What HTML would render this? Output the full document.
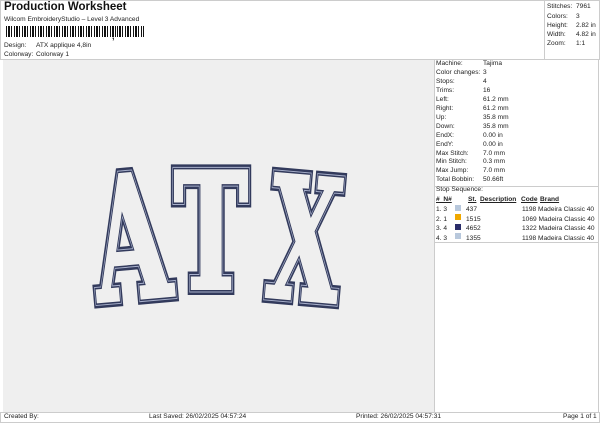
<!DOCTYPE html>
<html><head><style>
body{margin:0;width:600px;height:424px;background:#fff;font-family:"Liberation Sans",sans-serif;position:relative;overflow:hidden;color:#222}
.a{position:absolute;font-size:6.6px;white-space:nowrap}
.bc{position:absolute;left:6px;top:26px;height:11px;width:138px;background:repeating-linear-gradient(90deg,#111 0 1px,#fff 1px 2px,#111 2px 4px,#fff 4px 5px,#111 5px 6px,#fff 6px 8px)}
</style></head><body>
<div class="a" style="left:4px;top:1px;font-size:11.5px;font-weight:bold;color:#111">Production Worksheet</div>
<div class="a" style="left:4px;top:16px">Wilcom EmbroideryStudio – Level 3 Advanced</div>
<div class="bc"></div>
<div class="a" style="left:112px;top:31px;font-weight:bold;font-size:9px">,</div>
<div class="bc" style="left:117px;width:27px"></div>
<div class="a" style="left:4px;top:42px">Design:</div><div class="a" style="left:36px;top:42px">ATX applique 4,8in</div>
<div class="a" style="left:4px;top:51px">Colorway:</div><div class="a" style="left:36px;top:51px">Colorway 1</div>
<div style="position:absolute;left:0;top:0;width:599px;height:60px;border:1px solid #ccc;box-sizing:border-box;border-right:none"></div>
<div style="position:absolute;left:544px;top:0;width:56px;height:60px;border:1px solid #ccc;box-sizing:border-box;border-right:1px solid #ccc"></div>
<div class="a" style="left:547px;top:3px">Stitches:</div><div class="a" style="left:576px;top:3px">7961</div>
<div class="a" style="left:547px;top:13px">Colors:</div><div class="a" style="left:576px;top:13px">3</div>
<div class="a" style="left:547px;top:22px">Height:</div><div class="a" style="left:576px;top:22px">2.82 in</div>
<div class="a" style="left:547px;top:31px">Width:</div><div class="a" style="left:576px;top:31px">4.82 in</div>
<div class="a" style="left:547px;top:40px">Zoom:</div><div class="a" style="left:576px;top:40px">1:1</div>
<div style="position:absolute;left:3px;top:60px;width:431px;height:352px;background:#efefef"></div>
<svg style="position:absolute;left:0;top:0" width="600" height="424">
<defs>
<text id="tA" x="0" y="0" font-size="170" text-anchor="middle" font-family="DejaVu Serif,serif" font-weight="bold">A</text>
<text id="tT" x="0" y="0" font-size="160" text-anchor="middle" font-family="DejaVu Serif,serif" font-weight="bold">T</text>
<text id="tX" x="0" y="0" font-size="168" text-anchor="middle" font-family="DejaVu Serif,serif" font-weight="bold">X</text>
</defs>
<g stroke-linejoin="miter">
<g transform="translate(136,298) rotate(-5) scale(0.57,1)">
<use href="#tA" fill="#323a5c" stroke="#323a5c" stroke-width="14"/><use href="#tA" fill="#a9b1cc" stroke="#a9b1cc" stroke-width="9"/><use href="#tA" fill="#323a5c" stroke="#323a5c" stroke-width="7"/><use href="#tA" fill="#efefef" stroke="#efefef" stroke-width="4"/></g>
<g transform="translate(211,288) scale(0.62,1)">
<use href="#tT" fill="#323a5c" stroke="#323a5c" stroke-width="14"/><use href="#tT" fill="#a9b1cc" stroke="#a9b1cc" stroke-width="9"/><use href="#tT" fill="#323a5c" stroke="#323a5c" stroke-width="7"/><use href="#tT" fill="#efefef" stroke="#efefef" stroke-width="4"/></g>
<g transform="translate(300,299) rotate(5) scale(0.55,1)">
<use href="#tX" fill="#323a5c" stroke="#323a5c" stroke-width="14"/><use href="#tX" fill="#a9b1cc" stroke="#a9b1cc" stroke-width="9"/><use href="#tX" fill="#323a5c" stroke="#323a5c" stroke-width="7"/><use href="#tX" fill="#efefef" stroke="#efefef" stroke-width="4"/></g>
</g></svg>
<div style="position:absolute;left:434px;top:60px;width:165px;height:352px;border-left:1px solid #ccc;border-right:1px solid #ccc;box-sizing:border-box"></div>
<div style="position:absolute;left:434px;top:186px;width:165px;border-top:1px solid #ccc"></div>
<div style="position:absolute;left:434px;top:242px;width:165px;border-top:1px solid #ccc"></div>
<div class="a" style="left:436px;top:60px;line-height:8.95px">Machine:<br>Color changes:<br>Stops:<br>Trims:<br>Left:<br>Right:<br>Up:<br>Down:<br>EndX:<br>EndY:<br>Max Stitch:<br>Min Stitch:<br>Max Jump:<br>Total Bobbin:</div>
<div class="a" style="left:436px;top:186px">Stop Sequence:</div>
<div class="a" style="left:483px;top:60px;line-height:8.95px">Tajima<br>3<br>4<br>16<br>61.2 mm<br>61.2 mm<br>35.8 mm<br>35.8 mm<br>0.00 in<br>0.00 in<br>7.0 mm<br>0.3 mm<br>7.0 mm<br>50.66ft</div>
<div class="a" style="left:436px;top:196px;font-weight:bold;text-decoration:underline">#&nbsp;&nbsp;N#</div>
<div class="a" style="left:468px;top:196px;font-weight:bold;text-decoration:underline">St.</div>
<div class="a" style="left:480px;top:196px;font-weight:bold;text-decoration:underline">Description</div>
<div class="a" style="left:521px;top:196px;font-weight:bold;text-decoration:underline">Code</div>
<div class="a" style="left:540px;top:196px;font-weight:bold;text-decoration:underline">Brand</div>
<div class="a" style="left:436px;top:205px;line-height:9.6px">1.&nbsp;3<br>2.&nbsp;1<br>3.&nbsp;4<br>4.&nbsp;3</div>
<div style="position:absolute;left:455px;top:205px;width:6px;height:6px;background:#b8c8dc"></div>
<div style="position:absolute;left:455px;top:214px;width:6px;height:6px;background:#f0a800"></div>
<div style="position:absolute;left:455px;top:224px;width:6px;height:6px;background:#2a2d6a"></div>
<div style="position:absolute;left:455px;top:233px;width:6px;height:6px;background:#b8c8dc"></div>
<div class="a" style="left:466px;top:205px;line-height:9.6px">437<br>1515<br>4652<br>1355</div>
<div class="a" style="left:522px;top:205px;line-height:9.6px">1198 Madeira Classic 40<br>1069 Madeira Classic 40<br>1322 Madeira Classic 40<br>1198 Madeira Classic 40</div>
<div style="position:absolute;left:0;top:412px;width:600px;height:11px;border:1px solid #ccc;box-sizing:border-box"></div>
<div class="a" style="left:4px;top:413px">Created By:</div>
<div class="a" style="left:149px;top:413px">Last Saved: 26/02/2025 04:57:24</div>
<div class="a" style="left:356px;top:413px">Printed: 26/02/2025 04:57:31</div>
<div class="a" style="left:563px;top:413px">Page 1 of 1</div>
</body></html>
